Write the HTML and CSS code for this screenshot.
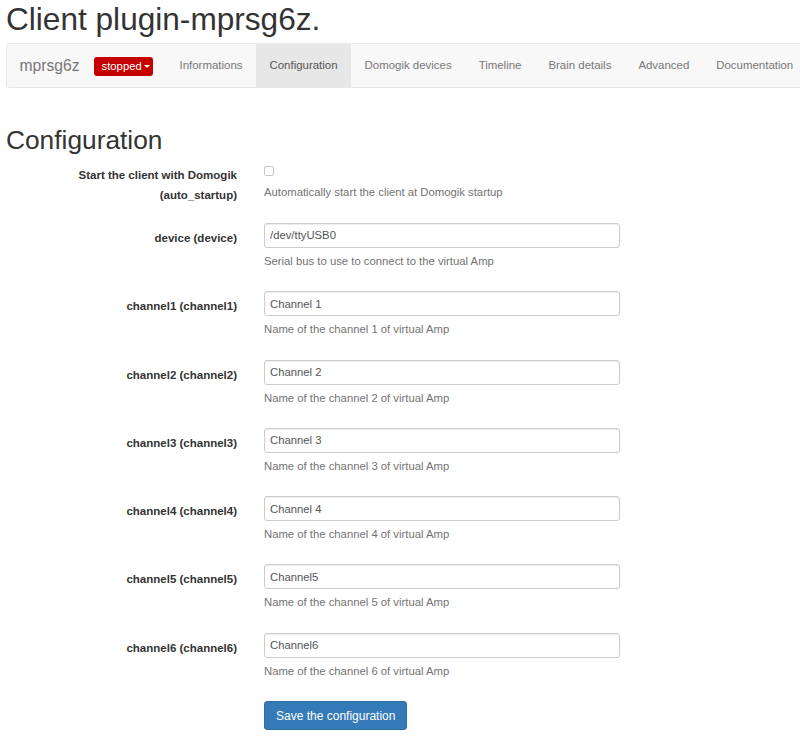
FILE: index.html
```html
<!DOCTYPE html>
<html lang="en">
<head>
<meta charset="utf-8">
<title>Client plugin-mprsg6z.</title>
<link rel="stylesheet" href="styles.css">
</head>
<body>
<h1 class="page-title">Client plugin-mprsg6z.</h1>
<nav class="navbar">
  <span class="brand">mprsg6z</span>
  <span class="status">stopped<span class="caret"></span></span>
  <a class="nav-link">Informations</a>
  <a class="nav-link active">Configuration</a>
  <a class="nav-link">Domogik devices</a>
  <a class="nav-link">Timeline</a>
  <a class="nav-link">Brain details</a>
  <a class="nav-link">Advanced</a>
  <a class="nav-link">Documentation</a>
</nav>
<h2 class="section-title">Configuration</h2>
<form class="config-form">
  <div class="form-group form-group-check">
    <label class="control-label">Start the client with Domogik<br>(auto_startup)</label>
    <div class="control">
      <div class="check-wrap"><input type="checkbox" class="check"></div>
      <p class="help">Automatically start the client at Domogik startup</p>
    </div>
  </div>
  <div class="form-group">
    <label class="control-label">device (device)</label>
    <div class="control">
      <input class="text-input" type="text" value="/dev/ttyUSB0">
      <p class="help">Serial bus to use to connect to the virtual Amp</p>
    </div>
  </div>
  <div class="form-group">
    <label class="control-label">channel1 (channel1)</label>
    <div class="control">
      <input class="text-input" type="text" value="Channel 1">
      <p class="help">Name of the channel 1 of virtual Amp</p>
    </div>
  </div>
  <div class="form-group">
    <label class="control-label">channel2 (channel2)</label>
    <div class="control">
      <input class="text-input" type="text" value="Channel 2">
      <p class="help">Name of the channel 2 of virtual Amp</p>
    </div>
  </div>
  <div class="form-group">
    <label class="control-label">channel3 (channel3)</label>
    <div class="control">
      <input class="text-input" type="text" value="Channel 3">
      <p class="help">Name of the channel 3 of virtual Amp</p>
    </div>
  </div>
  <div class="form-group">
    <label class="control-label">channel4 (channel4)</label>
    <div class="control">
      <input class="text-input" type="text" value="Channel 4">
      <p class="help">Name of the channel 4 of virtual Amp</p>
    </div>
  </div>
  <div class="form-group">
    <label class="control-label">channel5 (channel5)</label>
    <div class="control">
      <input class="text-input" type="text" value="Channel5">
      <p class="help">Name of the channel 5 of virtual Amp</p>
    </div>
  </div>
  <div class="form-group">
    <label class="control-label">channel6 (channel6)</label>
    <div class="control">
      <input class="text-input" type="text" value="Channel6">
      <p class="help">Name of the channel 6 of virtual Amp</p>
    </div>
  </div>
  <div class="form-group">
    <span></span>
    <div class="control">
      <button type="button" class="btn-save">Save the configuration</button>
    </div>
  </div>
</form>
</body>
</html>
```

FILE: styles.css
```css
html, body {
  margin: 0;
  overflow: hidden;
}
body {
  padding: 2px 0 0 6px;
  font-family: "Liberation Sans", Arial, Helvetica, sans-serif;
  font-size: 11.3px;
  line-height: 16.2px;
  color: #333;
  background: #fff;
}
.page-title {
  margin: 0 0 6.6px;
  font-size: 31.6px;
  line-height: 34.4px;
  font-weight: normal;
  color: #333;
}
.navbar {
  display: flex;
  align-items: stretch;
  width: max-content;
  height: 43px;
  border: 1px solid #e7e7e7;
  border-radius: 4px;
  background: #f8f8f8;
  white-space: nowrap;
  margin-bottom: 38px;
}
.brand {
  padding: 0 14px 0 12.5px;
  font-size: 15.66px;
  line-height: 43px;
  color: #777;
}
.status {
  align-self: center;
  display: flex;
  align-items: center;
  width: 59px;
  height: 19px;
  margin: 1px 13.5px 0 0;
  padding: 0 0 0 8px;
  background: #c40000;
  color: #fff;
  border-radius: 3px;
  font-size: 11.3px;
  box-sizing: border-box;
}
.caret {
  display: inline-block;
  width: 0;
  height: 0;
  margin-left: 2px;
  border-top: 3.5px solid #fff;
  border-left: 3.5px solid transparent;
  border-right: 3.5px solid transparent;
}
.nav-link {
  padding: 0 13.5px;
  line-height: 43px;
  font-size: 11.45px;
  color: #777;
}
.nav-link.active {
  background: #e7e7e7;
  color: #555;
}
.section-title {
  margin: 0 0 5.4px;
  font-size: 26.3px;
  line-height: 28.6px;
  font-weight: normal;
  color: #333;
}
.config-form {
  margin: 0;
}
.form-group {
  display: grid;
  grid-template-columns: 231px 356px;
  column-gap: 27px;
  align-items: start;
  margin-bottom: 22.1px;
}
.form-group-check {
  margin-bottom: 18px;
}
.control-label {
  padding-top: 5px;
  line-height: 20px;
  font-size: 11.5px;
  font-weight: bold;
  text-align: right;
  color: #333;
}
.control {
  display: flex;
  flex-direction: column;
}
.check-wrap {
  height: 19px;
}
.check {
  appearance: none;
  -webkit-appearance: none;
  display: block;
  width: 10px;
  height: 10px;
  margin: 6px 0 0 0;
  border: 1px solid #c8c8c8;
  border-radius: 2px;
  background: #fff;
}
.help {
  margin: 5px 0 0;
  color: #737373;
  line-height: 16.2px;
}
.text-input {
  box-sizing: border-box;
  width: 356px;
  height: 25px;
  margin: 0;
  padding: 0 5px;
  border: 1px solid #ccc;
  border-radius: 3px;
  box-shadow: inset 0 1px 1px rgba(0, 0, 0, 0.075);
  font-family: inherit;
  font-size: 11.3px;
  color: #555;
  background: #fff;
  outline: none;
}
.btn-save {
  align-self: flex-start;
  box-sizing: border-box;
  height: 29px;
  padding: 0 11px;
  border: 1px solid #2e6da4;
  border-radius: 3px;
  background: #337ab7;
  color: #fff;
  font-family: inherit;
  font-size: 12px;
  cursor: pointer;
}
```
